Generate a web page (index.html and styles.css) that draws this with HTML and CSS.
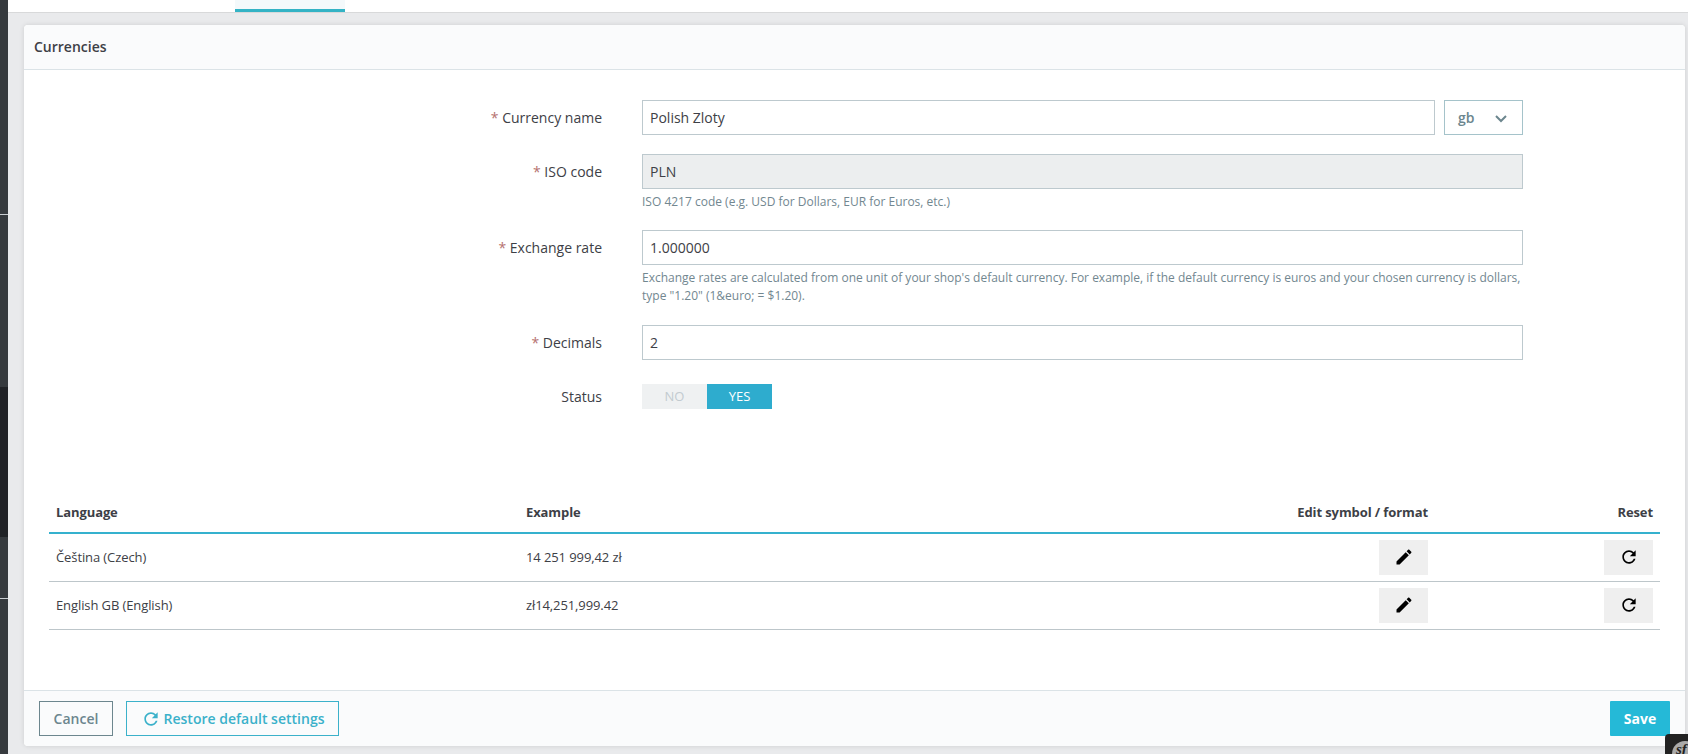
FILE: index.html
```
<!DOCTYPE html>
<html lang="en">
<head>
<meta charset="utf-8">
<title>Currencies</title>
<link rel="stylesheet" href="styles.css">
</head>
<body>
<svg class="sprite" aria-hidden="true">
  <symbol id="refresh" viewBox="0 0 24 24"><path d="M17.65 6.35C16.2 4.9 14.21 4 12 4c-4.42 0-7.99 3.58-7.99 8s3.57 8 7.99 8c3.73 0 6.84-2.55 7.73-6h-2.08c-.82 2.33-3.04 4-5.65 4-3.31 0-6-2.69-6-6s2.69-6 6-6c1.66 0 3.14.69 4.22 1.78L13 11h7V4l-2.350 2.350z"/></symbol>
  <symbol id="edit" viewBox="0 0 24 24"><path d="M3 17.250V21h3.750L17.810 9.940l-3.750-3.750L3 17.250zM20.710 7.040c.39-.39.39-1.020 0-1.410l-2.340-2.340c-.39-.39-1.020-.39-1.410 0l-1.830 1.830 3.750 3.750 1.830-1.830z"/></symbol>
</svg>
<div class="app">
  <nav class="sidebar">
    <div class="group"></div>
    <div class="group group-mid"></div>
    <div class="group active"></div>
    <div class="group group-end"></div>
    <div class="group group-last"></div>
  </nav>
  <div class="content">
    <div class="tabs"><div class="tab"></div></div>
    <main class="card">
      <header class="card-header">Currencies</header>
      <div class="card-body">
        <form class="form">
          <div class="row">
            <label class="label"><span class="req">*</span> Currency name</label>
            <div class="field name-field">
              <div class="input">Polish Zloty</div>
              <div class="select">gb<svg class="chevron" viewBox="0 0 12 8"><path d="M1 1l5 5 5-5"/></svg></div>
            </div>
          </div>
          <div class="row">
            <label class="label"><span class="req">*</span> ISO code</label>
            <div class="field"><div class="input disabled">PLN</div>
              <p class="help">ISO 4217 code (e.g. USD for Dollars, EUR for Euros, etc.)</p></div>
          </div>
          <div class="row row-rate">
            <label class="label"><span class="req">*</span> Exchange rate</label>
            <div class="field"><div class="input">1.000000</div>
              <p class="help">Exchange rates are calculated from one unit of your shop's default currency. For example, if the default currency is euros and your chosen currency is dollars,<br>type "1.20" (1&amp;euro; = $1.20).</p></div>
          </div>
          <div class="row">
            <label class="label"><span class="req">*</span> Decimals</label>
            <div class="field"><div class="input">2</div></div>
          </div>
          <div class="row">
            <label class="label">Status</label>
            <div class="field"><div class="switch"><span class="off">NO</span><span class="on">YES</span></div></div>
          </div>
        </form>
        <table class="table">
          <thead><tr><th class="c-lang">Language</th><th>Example</th><th class="c-edit">Edit symbol / format</th><th class="c-reset">Reset</th></tr></thead>
          <tbody>
            <tr><td>Čeština (Czech)</td><td>14 251 999,42 zł</td>
              <td class="end"><span class="icon-btn"><svg class="icon"><use href="#edit"/></svg></span></td>
              <td class="end"><span class="icon-btn"><svg class="icon"><use href="#refresh"/></svg></span></td></tr>
            <tr><td>English GB (English)</td><td>zł14,251,999.42</td>
              <td class="end"><span class="icon-btn"><svg class="icon"><use href="#edit"/></svg></span></td>
              <td class="end"><span class="icon-btn"><svg class="icon"><use href="#refresh"/></svg></span></td></tr>
          </tbody>
        </table>
      </div>
      <footer class="card-footer">
        <span class="btn cancel">Cancel</span>
        <span class="btn restore"><svg class="icon"><use href="#refresh"/></svg>Restore default settings</span>
        <span class="btn save">Save</span>
      </footer>
    </main>
  </div>
</div>
<div class="debug-badge"><span class="debug-logo">sf</span></div>
</body>
</html>
```
FILE: styles.css
```
* { box-sizing: border-box; }
body { margin: 0; height: 754px; overflow: hidden; background: #e9eaec; color: #3d4046; font: 14px/19px "Open Sans", sans-serif; }
.sprite { display: none; }
.app { display: flex; height: 754px; }
.sidebar { display: flex; flex-direction: column; width: 8px; flex: none; background: #363a3e; }
.group { height: 215px; border-bottom: 1px solid #c9cdd1; }
.group-mid { height: 172px; border: 0; }
.active { height: 150px; border: 0; background: #202226; }
.group-end { height: 62px; }
.group-last { flex: 1; border: 0; }
.content { flex: 1; padding-right: 3px; min-width: 0; }
.tabs { height: 13px; margin-right: -3px; padding-left: 227px; background: #fff; border-bottom: 1px solid #d8d9da; }
.tab { width: 110px; height: 12px; background: #f4f9fb; border-bottom: 3px solid #34b3c5; }
.card { display: flex; flex-direction: column; height: 721px; margin: 12px 0 0 16px; background: #fff; border-radius: 4px; box-shadow: 0 0 5px rgba(0,0,0,.12); overflow: hidden; }
.card-header { height: 45px; padding: 12px 10px; background: #fafbfc; border-bottom: 1px solid #dbe3e7; font-weight: 600; line-height: 20px; }
.card-body { flex: 1; padding: 30px 25px 0; }
.form { height: 383px; }
.row { display: flex; margin-bottom: 19px; }
.row-rate { margin-bottom: 20px; }
.label { width: 553px; padding-top: 8px; text-align: right; }
.req { color: #b5716f; }
.field { width: 881px; margin-left: 40px; }
.name-field { display: flex; gap: 9px; }
.input { flex: 1; height: 35px; padding: 7px; border: 1px solid #bdc9ce; background: #fff; }
.disabled { background: #eceeef; }
.select { display: flex; align-items: center; justify-content: space-between; width: 79px; height: 35px; padding: 0 15px 1px 13px; border: 1px solid #a5c3ca; color: #6c868e; font-weight: 600; }
.chevron { width: 12px; height: 8px; margin-top: 3px; fill: none; stroke: #6c868e; stroke-width: 2; }
.help { margin: 4px 0 0; color: #728790; font-size: 12px; line-height: 18px; white-space: nowrap; }
.switch { display: flex; width: 130px; height: 25px; margin-top: 5px; font-size: 13px; line-height: 25px; text-align: center; }
.off { flex: 1; background: #eff1f2; color: #c2cbd0; }
.on { flex: 1; background: #2eacce; color: #fff; }
.table { width: 1611px; table-layout: fixed; border-collapse: separate; border-spacing: 0; font-size: 13px; line-height: 18px; letter-spacing: -.1px; }
th { height: 51px; padding: 8px 7px 0; border-bottom: 2px solid #35b1ce; text-align: left; font-weight: 700; }
td { height: 48px; padding: 0 7px 1px; border-bottom: 1px solid #bdc6ca; }
.c-lang { width: 470px; }
.c-edit { width: 300px; text-align: right; }
.c-reset { width: 225px; text-align: right; }
.end { text-align: right; }
.icon-btn { display: inline-flex; align-items: center; justify-content: center; width: 49px; height: 35px; vertical-align: middle; background: #efefef; color: #000; }
.icon { width: 20px; height: 20px; fill: currentColor; }
.card-footer { display: flex; height: 56px; padding: 10px 15px; background: #fafbfc; border-top: 1px solid #dbe3e7; }
.btn { display: flex; align-items: center; justify-content: center; height: 35px; border: 1px solid; font-weight: 600; }
.cancel { width: 74px; margin-right: 13px; color: #6c868e; }
.restore { width: 213px; gap: 3px; color: #3bb1ca; }
.save { width: 60px; margin-left: auto; border: 0; border-radius: 1px; background: #25b9d7; color: #fff; font-weight: 700; }
.debug-badge { position: absolute; left: 1665px; top: 734px; width: 23px; height: 20px; padding: 7px 0 0 7px; overflow: hidden; border-radius: 4px 0 0 0; background: #222; }
.debug-logo { display: block; width: 26px; height: 26px; padding-left: 4px; border-radius: 50%; background: #aaa; color: #222; font: italic bold 15px/17px "Liberation Serif", serif; }
```
